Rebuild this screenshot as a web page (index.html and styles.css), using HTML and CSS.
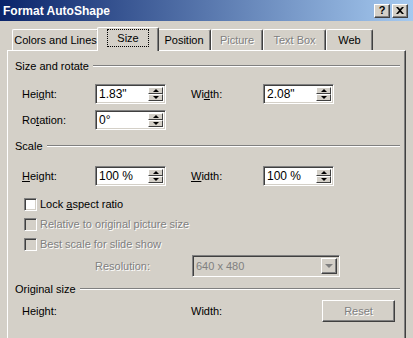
FILE: index.html
```html
<!DOCTYPE html>
<html lang="en">
<head>
  <meta charset="UTF-8" />
  <title>Format AutoShape</title>
  <link rel="stylesheet" href="styles.css">
</head>
<body>

<div class="dialog">
  <div class="titlebar">
    <span class="title">Format AutoShape</span>
    <div class="caption-buttons">
      <span class="cap-btn help">?</span>
      <span class="cap-btn close">
        <svg width="8" height="7" viewBox="0 0 8 7"><path d="M0 0h2l2 2 2-2h2L5 3.5 8 7H6L4 5 2 7H0l3-3.5z" fill="#000"/></svg>
      </span>
    </div>
  </div>

  <div class="dialog-body">
    <div class="tabs">
      <div class="tab">Colors and Lines</div>
      <div class="tab active"><span class="focus">Size</span></div>
      <div class="tab">Position</div>
      <div class="tab disabled">Picture</div>
      <div class="tab disabled">Text Box</div>
      <div class="tab">Web</div>
    </div>

    <div class="panel">
      <div class="group-title g-size"><span>Size and rotate</span><i class="rule"></i></div>

      <div class="row r-size">
        <span class="field-label">Hei<u>g</u>ht:</span>
        <div class="spin"><span class="edit-text">1.83"</span><div class="spin-btns"><span class="sb up"><b></b></span><span class="sb down"><b></b></span></div></div>
        <span class="field-label second">Wi<u>d</u>th:</span>
        <div class="spin"><span class="edit-text">2.08"</span><div class="spin-btns"><span class="sb up"><b></b></span><span class="sb down"><b></b></span></div></div>
      </div>

      <div class="row r-rotate">
        <span class="field-label">Ro<u>t</u>ation:</span>
        <div class="spin"><span class="edit-text">0°</span><div class="spin-btns"><span class="sb up"><b></b></span><span class="sb down"><b></b></span></div></div>
      </div>

      <div class="group-title g-scale"><span>Scale</span><i class="rule"></i></div>

      <div class="row r-scale">
        <span class="field-label"><u>H</u>eight:</span>
        <div class="spin"><span class="edit-text">100 %</span><div class="spin-btns"><span class="sb up"><b></b></span><span class="sb down"><b></b></span></div></div>
        <span class="field-label second"><u>W</u>idth:</span>
        <div class="spin"><span class="edit-text">100 %</span><div class="spin-btns"><span class="sb up"><b></b></span><span class="sb down"><b></b></span></div></div>
      </div>

      <div class="checks">
        <div class="check"><span class="box"></span><span>Lock <u>a</u>spect ratio</span></div>
        <div class="check disabled"><span class="box"></span><span>Relative to original picture size</span></div>
        <div class="check disabled"><span class="box"></span><span>Best scale for slide show</span></div>
      </div>

      <div class="row r-resolution">
        <span class="res-label">Resolution:</span>
        <div class="combo"><span class="combo-text">640 x 480</span><span class="combo-btn"><b></b></span></div>
      </div>

      <div class="group-title g-orig"><span>Original size</span><i class="rule"></i></div>

      <div class="row r-orig">
        <span class="orig-label">Height:</span>
        <span class="orig-label second">Width:</span>
        <span class="btn disabled">Reset</span>
      </div>
    </div>
  </div>
</div>

</body>
</html>
```

FILE: styles.css
```css
body {
  margin: 0;
  background: #d4d0c8;
  font-family: "Liberation Sans", Arial, sans-serif;
  font-size: 11px;
  color: #000;
}

u {
  text-decoration-thickness: 1px;
  text-underline-offset: 1px;
}

.dialog {
  width: 413px;
  height: 338px;
  overflow: hidden;
  background: #d4d0c8;
}

/* title bar */
.titlebar {
  height: 21px;
  display: flex;
  align-items: center;
  justify-content: space-between;
  padding: 0 5px 0 3px;
  background: linear-gradient(to right, #0a246a, #a6caf0);
  color: #fff;
  font-weight: bold;
  font-size: 12px;
}

.caption-buttons {
  display: flex;
  gap: 2px;
}

.cap-btn {
  width: 16px;
  height: 14px;
  box-sizing: border-box;
  background: #d4d0c8;
  border: 1px solid;
  border-color: #fff #404040 #404040 #fff;
  box-shadow: inset -1px -1px #808080;
  display: flex;
  align-items: center;
  justify-content: center;
  color: #000;
  font-size: 11px;
  line-height: 1;
}

/* tabs */
.dialog-body {
  padding: 6px 0 0 7px;
  width: 399px;
}

.tabs {
  display: grid;
  grid-template-columns: 87px 58px 54px 52px 63px 47px;
  height: 23px;
  padding-left: 5px;
  align-items: end;
}

.tab {
  height: 21px;
  box-sizing: border-box;
  border: 1px solid;
  border-color: #fff #404040 transparent #fff;
  border-bottom: none;
  box-shadow: inset -1px 0 #808080;
  border-radius: 2px 2px 0 0;
  display: flex;
  align-items: center;
  justify-content: center;
  padding-bottom: 1px;
  white-space: nowrap;
}

.tab.active {
  height: 24px;
  margin: 0 -2px -1px;
  background: #d4d0c8;
  z-index: 1;
  padding-bottom: 3px;
}

.focus {
  outline: 1px dotted #000;
  outline-offset: 0;
  padding: 2px 9px;
}

.disabled {
  color: #808080;
  text-shadow: 1px 1px 0 #fff;
}

/* panel */
.panel {
  border: 1px solid;
  border-color: #fff #404040 transparent #fff;
  border-bottom: none;
  box-shadow: inset -1px 0 #808080;
  height: 300px;
  padding-right: 5px;
}

.group-title {
  display: flex;
  align-items: center;
  height: 14px;
  padding-left: 7px;
}

.rule {
  flex: 1;
  margin-left: 4px;
  border-top: 1px solid #808080;
  border-bottom: 1px solid #fff;
}

.g-size { margin-top: 8px; }
.g-scale { margin-top: 9px; }
.g-orig { margin-top: 5px; }

.row {
  display: flex;
  align-items: center;
  padding-left: 14px;
}

.r-size { margin-top: 11px; }
.r-rotate { margin-top: 6px; }
.r-scale { margin-top: 13px; }

.field-label {
  width: 73px;
}

.field-label.second {
  width: 72px;
  margin-left: 25px;
}

/* spin edit */
.spin {
  width: 71px;
  height: 20px;
  box-sizing: border-box;
  display: flex;
  background: #fff;
  border: 1px solid;
  border-color: #808080 #fff #fff #808080;
  box-shadow: inset 1px 1px #404040, inset -1px -1px #d4d0c8;
  padding: 2px 2px 2px 3px;
}

.edit-text {
  flex: 1;
  line-height: 14px;
  font-size: 12px;
}

.spin-btns {
  display: flex;
  flex-direction: column;
  width: 15px;
}

.sb {
  flex: 1;
  box-sizing: border-box;
  background: #d4d0c8;
  border: 1px solid;
  border-color: #fff #404040 #404040 #fff;
  display: flex;
  align-items: center;
  justify-content: center;
}

.sb b {
  width: 0;
  height: 0;
  border-left: 3px solid transparent;
  border-right: 3px solid transparent;
}

.sb.up b { border-bottom: 3px solid #000; }
.sb.down b { border-top: 3px solid #000; }

/* checkboxes */
.checks {
  margin-top: 8px;
  padding-left: 16px;
}

.check {
  height: 20px;
  display: flex;
  align-items: center;
  gap: 3px;
}

.box {
  width: 13px;
  height: 13px;
  box-sizing: border-box;
  background: #fff;
  border: 1px solid;
  border-color: #808080 #fff #fff #808080;
  box-shadow: inset 1px 1px #404040, inset -1px -1px #d4d0c8;
}

.check.disabled .box {
  background: #d4d0c8;
}

/* resolution combo */
.r-resolution {
  margin-top: 1px;
  padding-left: 87px;
}

.res-label {
  width: 97px;
  color: #808080;
  text-shadow: 1px 1px 0 #fff;
}

.combo {
  width: 148px;
  height: 22px;
  box-sizing: border-box;
  display: flex;
  background: #d4d0c8;
  border: 1px solid;
  border-color: #808080 #fff #fff #808080;
  box-shadow: inset 1px 1px #404040, inset -1px -1px #d4d0c8;
  padding: 2px;
}

.combo-text {
  flex: 1;
  color: #808080;
  line-height: 16px;
  padding-left: 1px;
}

.combo-btn {
  width: 16px;
  box-sizing: border-box;
  border: 1px solid;
  border-color: #fff #404040 #404040 #fff;
  box-shadow: inset -1px -1px #808080;
  display: flex;
  align-items: center;
  justify-content: center;
}

.combo-btn b {
  width: 0;
  height: 0;
  border-left: 4px solid transparent;
  border-right: 4px solid transparent;
  border-top: 4px solid #808080;
}

/* original size */
.r-orig {
  margin-top: 4px;
}

.orig-label {
  width: 169px;
}

.orig-label.second {
  width: 131px;
}

.btn {
  width: 73px;
  height: 22px;
  box-sizing: border-box;
  border: 1px solid;
  border-color: #fff #404040 #404040 #fff;
  box-shadow: inset -1px -1px #808080;
  display: flex;
  align-items: center;
  justify-content: center;
}
```
